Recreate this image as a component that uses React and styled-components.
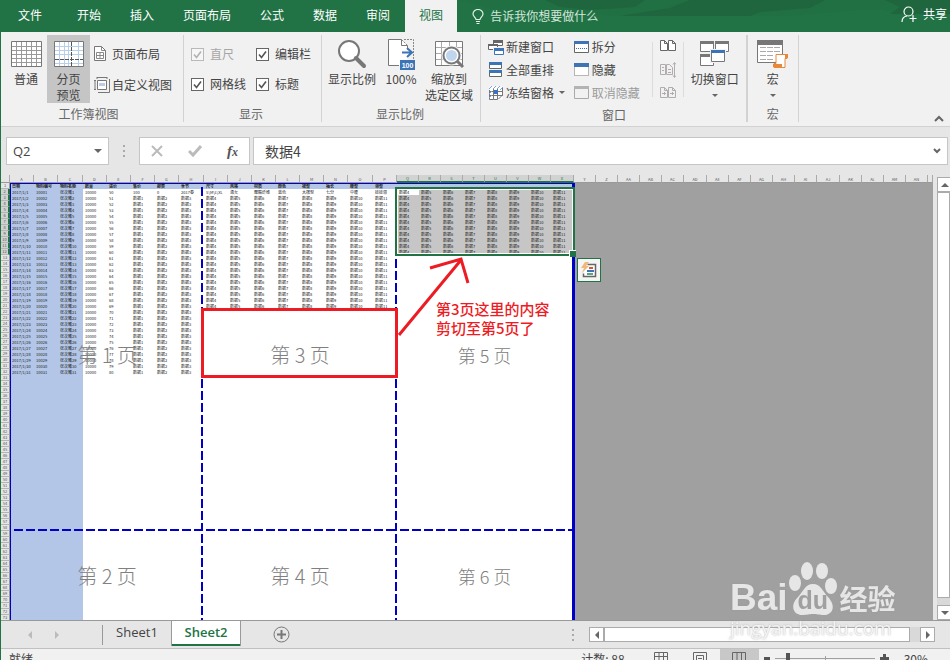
import React from "react";
import styled, { createGlobalStyle } from "styled-components";

const green = "#217346";
const blue = "#0000c8";
const red = "#ed1c24";
const ui = `"Noto Sans CJK SC", sans-serif`;
const latin = `"Open Sans", "Noto Sans CJK SC", sans-serif`;

const GlobalStyle = createGlobalStyle`
  * { box-sizing: border-box; }
  body { margin: 0; font: 12px/16px ${ui}; color: #444; background: #e6e6e6; }
  button, input { font: inherit; color: inherit; }
  button { border: 0; padding: 0; background: none; white-space: nowrap; }
  svg { display: block; flex: none; }
`;

const Window = styled.div`
  display: flex;
  flex-direction: column;
  height: 100vh;
  overflow: hidden;
  border-left: 1px solid ${green};
`;

/* ---------- title tabs ---------- */
const TopBar = styled.header`
  position: relative;
  display: flex;
  flex: none;
  height: 32px;
  background: ${green};
  color: #fff;
`;
const Texture = styled.svg`
  position: absolute;
  right: 0;
  top: 0;
`;
const Tabs = styled.nav`
  display: flex;
  gap: 1px;
`;
const Tab = styled.button`
  padding: 0 14px 2px;
  color: ${(p) => (p.$active ? green : "#fff")};
  background: ${(p) => (p.$active ? "#f1f1f1" : "transparent")};
  &:first-child { padding: 0 20px 2px 17px; }
`;
const TellMe = styled.button`
  position: relative;
  display: flex;
  align-items: center;
  gap: 6px;
  margin-left: 15px;
  color: #d3e5da;
`;
const Share = styled.button`
  position: relative;
  display: flex;
  align-items: center;
  gap: 6px;
  margin: 0 3px 4px auto;
  color: #fff;
`;

/* ---------- ribbon ---------- */
const Ribbon = styled.section`
  display: flex;
  flex: none;
  height: 95px;
  padding: 3px 0 4px;
  background: #f1f1f1;
  border-bottom: 1px solid #d2d2d2;
`;
const Group = styled.div`
  display: flex;
  flex-direction: column;
  padding: 0 ${(p) => p.$right || 0}px 0 ${(p) => p.$left || 0}px;
  border-right: ${(p) => p.$line || 1}px solid #d2d2d2;
`;
const GroupBody = styled.div`
  display: flex;
  height: 69px;
`;
const GroupLabel = styled.div`
  margin-top: 3px;
  text-align: center;
  color: #666;
`;
const BigButton = styled.button`
  display: flex;
  flex-direction: column;
  align-items: center;
  justify-content: flex-start;
  width: ${(p) => p.$w}px;
  padding-top: 3px;
  background: ${(p) => (p.$active ? "#c5c5c5" : "transparent")};
`;
const IconBox = styled.span`
  display: flex;
  flex: none;
  align-items: center;
  justify-content: center;
  height: 32px;
`;
const CaretBox = styled.span`
  padding-top: 7px;
`;
const Lines = styled.span`
  margin-top: 1px;
`;
const Stack = styled.div`
  display: flex;
  flex-direction: column;
  justify-content: center;
  margin-left: ${(p) => p.$left || 0}px;
`;
const SmallButton = styled.button`
  display: flex;
  align-items: center;
  gap: ${(p) => p.$gap || 2}px;
  height: ${(p) => p.$h || 23}px;
  opacity: ${(p) => (p.disabled ? 0.5 : 1)};
  color: #444;
`;
const Check = styled.label`
  display: flex;
  align-items: center;
  gap: 6px;
  height: 30px;
  color: ${(p) => (p.$off ? "#a6a6a6" : "#444")};
`;
const CheckInput = styled.input`
  appearance: none;
  width: 13px;
  height: 13px;
  margin: 0;
  border: 1px solid #666;
  background: #fff url("data:image/svg+xml,%3Csvg xmlns='http://www.w3.org/2000/svg' width='11' height='11'%3E%3Cpath d='M2 5.5l2.5 3L9 2.5' fill='none' stroke='%23555' stroke-width='1.6'/%3E%3C/svg%3E") no-repeat;
  &:disabled { opacity: 0.4; }
`;
const SideBySide = styled.div`
  display: flex;
  flex-direction: column;
  justify-content: space-between;
  height: 55px;
  margin: 7px 6px 0 12px;
  padding: 0 7px;
  border: solid #dcdcdc;
  border-width: 0 1px;
`;
const Collapse = styled.button`
  align-self: flex-end;
  margin: 0 6px 0 auto;
`;

/* ---------- formula bar ---------- */
const FormulaBar = styled.section`
  display: flex;
  flex: none;
  align-items: center;
  height: 48px;
  padding: 0 2px 0 5px;
  background: #e6e6e6;
`;
const Field = styled.div`
  display: flex;
  align-items: center;
  height: 28px;
  border: 1px solid #c6c6c6;
  background: #fff;
  width: ${(p) => (p.$w ? p.$w + "px" : "auto")};
  flex: ${(p) => (p.$w ? "none" : 1)};
  padding: 0 6px;
`;
const FieldInput = styled.input`
  flex: 1;
  min-width: 0;
  border: 0;
  outline: 0;
  padding: 0 0 0 ${(p) => p.$left || 0}px;
  background: none;
  font: ${(p) => p.$size}px/20px ${(p) => (p.$latin ? latin : ui)};
`;
const FxBox = styled(Field)`
  justify-content: space-between;
  margin: 0 3px 0 13px;
  padding: 0 11px;
`;
const FxLabel = styled.button`
  font: italic 700 15px/18px "Liberation Serif", serif;
  color: #555;
  & small { font-size: 12px; }
`;
const NameGap = styled.span`
  margin-left: 14px;
`;

/* ---------- sheet ---------- */
const SheetRow = styled.main`
  display: flex;
  flex: 1;
  min-height: 0;
  background: #e6e6e6;
`;
const GridArea = styled.div`
  position: relative;
  flex: 1;
  min-width: 0;
  overflow: hidden;
  background: #a0a0a0;
`;
const Grid = styled.table`
  width: 100%;
  table-layout: fixed;
  border-collapse: separate;
  border-spacing: 0;
  font: 4px/6px ${ui};
  color: #222;
`;
const Col = styled.col`
  width: ${(p) => p.$w}px;
`;
const ColHead = styled.th`
  height: 8px;
  padding: 0;
  font-weight: 400;
  line-height: 6px;
  color: ${(p) => (p.$on ? green : "#555")};
  background: ${(p) => (p.$on ? "#d2d2d2" : "#e6e6e6")};
  border-right: 1px solid #aaa;
  border-bottom: ${(p) => (p.$on ? "2px solid " + green : "1px solid #999")};
`;
const RowHead = styled.th`
  height: 6px;
  padding: 0;
  font-weight: 400;
  line-height: 5px;
  overflow: hidden;
  color: #555;
  background: ${(p) => (p.$on ? "#d2d2d2" : "#e6e6e6")};
  border-bottom: 1px solid #b5b5b5;
  border-right: ${(p) => (p.$on ? "2px solid " + green : "1px solid #999")};
`;
const tones = { key: "#b4c6e7", plain: "#fff", picked: "#c6c6c6" };
const Cell = styled.td`
  height: 6px;
  padding: 0 0 0 2px;
  overflow: hidden;
  white-space: nowrap;
  font-weight: ${(p) => (p.$bold ? 700 : 400)};
  background: ${(p) => tones[p.$tone]};
`;

/* ---------- overlays above the cells ---------- */
const Pages = styled.div`
  position: absolute;
  left: 9px;
  top: 8px;
  display: grid;
  grid-template-columns: 192px 194px 175px;
  grid-template-rows: 347px 96px;
  border-top: 1px solid ${blue};
  border-left: 1px solid ${blue};
  border-right: 3px solid ${blue};
`;
const dash = (dir) =>
  `repeating-linear-gradient(${dir}, transparent 0 3px, ${blue} 3px 12px)`;
const Page = styled.div`
  display: flex;
  align-items: center;
  justify-content: center;
  padding-bottom: 6px;
  font: 300 ${(p) => (p.$small ? 18 : 20)}px/24px ${ui};
  color: #808080;
  white-space: pre;
  background:
    ${(p) => (p.$right ? dash("180deg") : "none")} right top / 2px 100% no-repeat,
    ${(p) => (p.$bottom ? dash("90deg") : "none")} left bottom / 100% 2px no-repeat;
`;
const Selection = styled.div`
  position: absolute;
  left: 394px;
  top: 12px;
  width: 180px;
  height: 69px;
  border: 2px solid ${green};
  outline: 1px solid #fff;
  outline-offset: -3px;
  &::after {
    content: "";
    position: absolute;
    right: -3px;
    bottom: -3px;
    width: 6px;
    height: 6px;
    background: ${green};
    border: solid #fff;
    border-width: 1px 0 0 1px;
  }
`;
const RedBox = styled.div`
  position: absolute;
  left: 200px;
  top: 133px;
  width: 197px;
  height: 70px;
  border: 3px solid ${red};
`;
const Arrow = styled.svg`
  position: absolute;
  left: 394px;
  top: 80px;
`;
const Note = styled.p`
  position: absolute;
  left: 435px;
  top: 124px;
  margin: 0;
  font: 500 15px/19px ${ui};
  color: ${red};
`;
const PasteOptions = styled.button`
  position: absolute;
  left: 576px;
  top: 83px;
  display: flex;
  align-items: center;
  justify-content: center;
  width: 24px;
  height: 24px;
  border: 1px solid ${green};
  background: #f5f5f5;
`;
const Watermark = styled.div`
  position: fixed;
  right: 50px;
  bottom: 21px;
  display: flex;
  flex-direction: column;
  width: 170px;
  color: #e6e6e6;
  text-shadow: 0 0 2px #999;
  pointer-events: none;
`;
const Brand = styled.div`
  display: flex;
  align-items: flex-end;
  height: 56px;
  font: 700 37px/38px "Liberation Sans", sans-serif;
`;
const Paw = styled.span`
  position: relative;
  width: 50px;
  height: 56px;
`;
const Du = styled.span`
  position: absolute;
  left: 10px;
  bottom: 5px;
  font: 700 25px/24px "Liberation Sans", sans-serif;
  color: #a0a0a0;
  text-shadow: none;
`;
const BrandCn = styled.span`
  padding: 0 0 4px 2px;
  font: 700 28px/30px ${ui};
`;
const Site = styled.span`
  font: 400 19px/22px ${latin};
  color: #f4f4f4;
  text-shadow: 0 0 2px #aaa;
`;

/* ---------- scroll bars ---------- */
const VScroll = styled.div`
  display: flex;
  flex-direction: column;
  flex: none;
  width: 13px;
  margin: 2px 0 0 4px;
  background: #d9d9d9;
`;
const ScrollButton = styled.button`
  display: flex;
  align-items: center;
  justify-content: center;
  flex: none;
  width: 15px;
  height: 15px;
  border: 1px solid #ababab;
  background: #fff;
`;
const Thumb = styled.div`
  flex: 1;
  border: 1px solid #ababab;
  background: #fff;
  margin: ${(p) => (p.$v ? "0 0 7px" : "0 10px 0 0")};
`;
const HScroll = styled.div`
  display: flex;
  width: 346px;
  height: 15px;
  background: #d9d9d9;
`;

/* ---------- sheet tabs and status ---------- */
const SheetBar = styled.nav`
  display: flex;
  flex: none;
  align-items: center;
  height: 28px;
  padding-right: 15px;
  border-top: 1px solid #999;
  background: #e6e6e6;
`;
const NavArrows = styled.div`
  display: flex;
  align-items: center;
  gap: 23px;
  width: 102px;
  height: 20px;
  padding-left: 27px;
  border-right: 1px solid #999;
`;
const SheetTab = styled.button`
  align-self: flex-start;
  height: 25px;
  width: ${(p) => (p.$active ? 70 : 68)}px;
  padding-bottom: 3px;
  font: ${(p) => (p.$active ? 600 : 400)} 13px/20px ${latin};
  color: ${(p) => (p.$active ? green : "#444")};
  background: ${(p) => (p.$active ? "#fff" : "transparent")};
  border: solid #999;
  border-width: ${(p) => (p.$active ? "0 1px" : "0")};
  box-shadow: ${(p) => (p.$active ? "inset 0 -2px " + green : "none")};
`;
const AddSheet = styled.button`
  margin-left: 32px;
`;
const Grip = styled.span`
  display: flex;
  margin: 0 14px 0 auto;
`;
const StatusBar = styled.footer`
  display: flex;
  flex: none;
  height: 12px;
  overflow: hidden;
  padding: 0 22px 0 8px;
  line-height: 20px;
  background: #f1f1f1;
  border-top: 1px solid #c0c0c0;
`;
const Count = styled.span`
  margin: 0 17px 0 auto;
`;
const ViewButton = styled.button`
  display: flex;
  justify-content: center;
  width: 39px;
  height: 20px;
  padding-top: 3px;
  background: ${(p) => (p.$active ? "#c8c8c8" : "transparent")};
`;
const ZoomButton = styled.button`
  display: flex;
  align-items: flex-start;
  height: 20px;
  padding: 5px ${(p) => p.$r || 5}px 0 5px;
`;
const ZoomSlider = styled.input`
  appearance: none;
  width: 100px;
  height: 20px;
  margin: -1px 0 0;
  background:
    linear-gradient(#a0a0a0, #a0a0a0) 50px 8px / 1px 5px no-repeat,
    linear-gradient(#a0a0a0, #a0a0a0) 0 10px / 100% 1px no-repeat;
  &::-webkit-slider-thumb {
    appearance: none;
    width: 4px;
    height: 11px;
    background: #555;
  }
`;

/* ---------- icons ---------- */
const Svg = ({ w, h, children }) => (
  <svg width={w} height={h} viewBox={`0 0 ${w} ${h}`} fill="none" aria-hidden="true">
    {children}
  </svg>
);
const Caret = ({ dir = "down", size = 4, color = "#666" }) => {
  const s = size;
  const shapes = {
    down: [2 * s, s, `M0 0H${2 * s}L${s} ${s}Z`],
    up: [2 * s, s, `M0 ${s}H${2 * s}L${s} 0Z`],
    left: [s, 2 * s, `M${s} 0V${2 * s}L0 ${s}Z`],
    right: [s, 2 * s, `M0 0V${2 * s}L${s} ${s}Z`],
  };
  const [w, h, d] = shapes[dir];
  return <Svg w={w} h={h}><path d={d} fill={color} /></Svg>;
};
const GridIcon = () => (
  <Svg w={31} h={26}>
    <path d="M.5.5h30v25h-30z" fill="#fff" stroke="#777" />
    <path d="M1 5.5h29M1 9.5h29M1 13.5h29M1 17.5h29M1 21.5h29M5.5 1v24M10.5 1v24M15.5 1v24M20.5 1v24M25.5 1v24" stroke="#999" />
  </Svg>
);
const BreakIcon = () => (
  <Svg w={30} h={26}>
    <path d="M.5.5h29v25h-29z" fill="#fff" stroke="#777" />
    <path d="M1 5.5h28M1 9.5h28M1 13.5h28M1 22.5h28M5.5 1v24M10.5 1v24M14.5 1v24M24.5 1v24" stroke="#b8cfec" />
    <path d="M17.5 1v24M1 18.5h28" stroke="#555" strokeDasharray="4 1" />
  </Svg>
);
const LayoutIcon = () => (
  <Svg w={12} h={15}>
    <path d="M.5.5h7l4 4v10H.5z" fill="#fff" stroke="#777" />
    <path d="M7.5.5v4h4M2.5 6.5h7v6h-7zM6 6.5v6M2.5 9.5h7" stroke="#888" />
  </Svg>
);
const CustomViewIcon = () => (
  <Svg w={16} h={16}>
    <path d="M3.5 3.5h9v9h-9z" fill="#fff" stroke="#777" />
    <path d="M5 6h6v3H5z" fill="#b8cfec" />
    <path d="M3 .5h10M3 0v2M13 0v2M0 3.5h2M1 3.5v9M0 12.5h2M15.5 2v13.5H4" stroke="#777" />
  </Svg>
);
const ZoomIcon = () => (
  <Svg w={30} h={29}>
    <circle cx="12" cy="11" r="10" fill="#fff" stroke="#777" strokeWidth="2" />
    <path d="M19 18l8 8" stroke="#777" strokeWidth="4" strokeLinecap="round" />
  </Svg>
);
const HundredIcon = () => (
  <Svg w={28} h={32}>
    <path d="M1.5 1.5h13l6 6v20h-19z" fill="#fff" />
    <path d="M12 27.5H1.5v-26h13v6h6v4" stroke="#777" />
    <path d="M14.5 1.5l6 6M17 1.5h9.500V22" stroke="#888" strokeDasharray="2 1" />
    <path d="M15 14.500h9M20 10l5 4.500-5 4.500" stroke="#3d74b5" strokeWidth="2" />
    <path d="M13 22h15v10H13z" fill="#3d74b5" />
    <text x="20.500" y="30" textAnchor="middle" fill="#fff" fontSize="7" fontWeight="700" fontFamily="Liberation Sans">100</text>
  </Svg>
);
const ZoomSelIcon = () => (
  <Svg w={31} h={30}>
    <path d="M1.5 2.500h27v24h-27z" fill="#fff" stroke="#777" />
    <path d="M2 8.500h26M2 14.500h26M2 20.500h26M7.500 3v23M15.500 3v5M22.500 3v6" stroke="#aaa" />
    <circle cx="17.500" cy="16.500" r="10" fill="#f1f1f1" />
    <circle cx="17.500" cy="16.500" r="8" fill="#fff" stroke="#777" strokeWidth="2" />
    <circle cx="17.500" cy="16.500" r="5.500" fill="#c0d5ee" />
    <path d="M23 22l6 6" stroke="#777" strokeWidth="3" />
  </Svg>
);
const NewWinIcon = () => (
  <Svg w={16} h={16}>
    <path d="M5.500 1.500h9v5h-9z" fill="#fff" stroke="#666" /><path d="M5 1h10v3H5z" fill="#666" />
    <path d="M.5 5.500h9v5h-9z" fill="#fff" stroke="#666" /><path d="M0 5h10v2H0z" fill="#666" />
    <path d="M5 8h11v8H5z" fill="#f1f1f1" />
    <path d="M6.500 9.500h9v6h-9z" fill="#fff" stroke="#3d74b5" /><path d="M6 9h10v3H6z" fill="#3d74b5" />
  </Svg>
);
const ArrangeIcon = () => (
  <Svg w={16} h={16}>
    <path d="M1.500.500h12v6h-12zM1.500 8.500h12v6h-12z" fill="#fff" stroke="#666" />
    <path d="M1 0h13v3H1zM1 8h13v3H1z" fill="#3d74b5" />
  </Svg>
);
const FreezeIcon = () => (
  <Svg w={16} h={16}>
    <path d="M1.500 1.500h13v13h-13z" fill="#fff" />
    <path d="M1.500 5v9.500h4M5.500 3v11.500h4V3.500M1 6.500h14M1 10.500h14M14.500 2v8l-4 4" stroke="#777" />
    <path d="M6 5h4v4H6z" fill="#3d74b5" />
    <path d="M1 4l3-3M5 4l3-3M9 4l3-3M12 5l3-3M1 9l3-3M1 13l3-3" stroke="#7fa5d4" />
  </Svg>
);
const SplitIcon = () => (
  <Svg w={16} h={14}>
    <path d="M.5 1.500h14v11H.5z" fill="#fff" stroke="#666" />
    <path d="M0 1h15v3H0z" fill="#3d74b5" />
    <path d="M2 8.500h11" stroke="#3d74b5" strokeDasharray="1 1" />
  </Svg>
);
const HideIcon = () => (
  <Svg w={16} h={14}>
    <path d="M.5 1.500h14v11H.5z" fill="#fff" stroke="#777" strokeDasharray="1 1" />
    <path d="M0 0h15v4H0z" fill="#3d74b5" />
  </Svg>
);
const UnhideIcon = () => (
  <Svg w={16} h={14}>
    <path d="M.5.500h14v12H.5z" fill="#f1f1f1" stroke="#666" />
    <path d="M0 0h15v3H0z" fill="#777" />
  </Svg>
);
const pagesPath = "M.5.500h4l3 3v7h-7zM4.500.500v3h3M8.500 10.500v-10h4l3 3v7zM12.500.500v3h3";
const PagesIcon = () => (
  <Svg w={16} h={12}><path d={pagesPath} fill="#fff" stroke="#666" /></Svg>
);
const SyncIcon = () => (
  <Svg w={16} h={16}>
    <path d="M.5 2.500h5v10h-5zM6.500 2.500h3l3 3v7h-6zM2 5.500h2M2 8.500h2M8 7.500h3M8 10.500h3M14.500 1v14M13 2.500l1.500-2 1.500 2M13 13.500l1.500 2 1.500-2" stroke="#b0acb0" />
  </Svg>
);
const ResetIcon = () => (
  <Svg w={16} h={12}>
    <path d={pagesPath} stroke="#b0acb0" />
    <path d="M2 6.500h4M4.500 5v3M10 6.500h4M12.500 5v3" stroke="#b0acb0" />
  </Svg>
);
const SwitchIcon = () => (
  <Svg w={30} h={26}>
    <path d="M.5.500h13v10H.5zM15.500.500h13v10h-13zM.5 13.500h13v11H.5z" fill="#fff" stroke="#777" />
    <path d="M0 0h14v3H0zM15 0h14v3H15zM0 13h14v3H0z" fill="#777" />
    <path d="M10 8h16v14H10z" fill="#f1f1f1" />
    <path d="M11.500 9.500h13v11h-13z" fill="#fff" stroke="#777" />
    <path d="M11 9h14v3H11z" fill="#3d74b5" />
  </Svg>
);
const MacroIcon = () => (
  <Svg w={31} h={28}>
    <path d="M.5.500h25v22H.5z" fill="#fff" stroke="#777" />
    <path d="M0 0h26v5H0z" fill="#777" />
    <path d="M3 7.500h20M3 11.500h20M3 15.500h14M3 19.500h13" stroke="#aaa" strokeDasharray="6 1" />
    <path d="M19 14.500h11v4h-2v9H17v-4h2z" fill="#fff" stroke="#e8883a" />
    <path d="M28 14h3v4h-3zM16 24h9v3h-9z" fill="#e8883a" />
  </Svg>
);
const Bulb = () => (
  <Svg w={12} h={15}>
    <path d="M4 10.500C3.500 8 1 7.500 1 5a5 4.500 0 0 1 10 0c0 2.500-2.500 3-3 5.500zM4 12.500h4M4.500 14.500h3" stroke="#e4efe8" strokeWidth="1.200" />
  </Svg>
);
const Person = () => (
  <Svg w={16} h={17}>
    <circle cx="7.500" cy="5.500" r="4.500" stroke="#fff" strokeWidth="1.200" />
    <path d="M1 16c0-4 2-5.500 5-6M8.500 12.500h7M12 9v7" stroke="#fff" strokeWidth="1.200" />
  </Svg>
);
const Dots = () => (
  <Svg w={3} h={12}><path d="M0 0h2v2H0zM0 5h2v2H0zM0 10h2v2H0z" fill="#aaa" /></Svg>
);

/* ---------- data ---------- */
const letter = (i) => (i < 26 ? "" : "A") + String.fromCharCode(65 + (i % 26));
const colWidths = [
  24, 24, 25, 24, 24, 24, 24, 25, 24, 24, 24, 24, 24, 24, 25, 24,
  22, 22, 22, 22, 22, 22, 22, 23,
  22, 22, 22, 22, 22, 23, 22, 22, 22, 22, 22, 23, 22, 22, 22, 22,
];
const titles = ["日期", "物料编号", "物料名称", "数量", "进价", "售价", "邮费", "季节", "尺寸", "风格", "材质", "颜色", "裙型", "袖长", "腰型", "领型"];
const firstRow = ["2017/1/1", "10001", "张次曦1", "10000", "50", "100", "0", "2017春", "S\\M\\L\\XL", "淑女", "聚酯纤维", "蓝色", "大摆型", "七分", "中腰", "娃娃领"];

function cellText(row, col) {
  if (row === 1) return titles[col] || "";
  if (row > 32) return "";
  const n = row - 1;
  if (col >= 16) return row <= 12 ? `数据${col - 12}` : "";
  if (row === 2) return firstRow[col];
  if (col === 0) return `2017/1/${n}`;
  if (col === 1) return `${10000 + n}`;
  if (col === 2) return `张次曦${n}`;
  if (col === 3) return "10000";
  if (col === 4) return `${49 + n}`;
  if (col >= 8 && row > 21) return "";
  return `数据${col - 4}`;
}
function cellTone(row, col) {
  if (row === 1 || col < 3) return "key";
  if (col >= 16 && row <= 12 && !(row === 2 && col === 16)) return "picked";
  return "plain";
}
const rows = Array.from({ length: 74 }, (_, i) => i + 1);
const dataCols = Array.from({ length: 24 }, (_, i) => i);

const Sheet = () => (
  <Grid>
    <colgroup>
      <Col $w={9} />
      {colWidths.map((w, i) => <Col key={i} $w={w} />)}
      <col />
    </colgroup>
    <thead>
      <tr>
        <ColHead />
        {colWidths.map((_, i) => (
          <ColHead key={i} $on={i >= 16 && i < 24}>{letter(i)}</ColHead>
        ))}
        <ColHead />
      </tr>
    </thead>
    <tbody>
      {rows.map((r) => (
        <tr key={r}>
          <RowHead $on={r > 1 && r < 13}>{r}</RowHead>
          {dataCols.map((c) => (
            <Cell key={c} $tone={cellTone(r, c)} $bold={r === 1}>{cellText(r, c)}</Cell>
          ))}
        </tr>
      ))}
    </tbody>
  </Grid>
);

export default function App() {
  return (
    <Window>
      <GlobalStyle />
      <TopBar>
        <Texture width="490" height="17" viewBox="0 0 490 17" aria-hidden="true">
          <path d="M0 0H490V15H440L424 10H400L330 16H150L120 13L70 15L30 9Z" fill="#217044" />
          <path d="M85 0H185L175 7L130 10L100 7ZM230 0H365L350 8L300 12L290 16H160L210 8ZM425 0H490V14H430L440 7Z" fill="#1f663e" />
        </Texture>
        <Tabs>
          {["文件", "开始", "插入", "页面布局", "公式", "数据", "审阅", "视图"].map((t) => (
            <Tab key={t} $active={t === "视图"}>{t}</Tab>
          ))}
        </Tabs>
        <TellMe><Bulb />告诉我你想要做什么</TellMe>
        <Share><Person />共享</Share>
      </TopBar>

      <Ribbon>
        <Group $left={4} $right={11}>
          <GroupBody>
            <BigButton $w={42}><IconBox><GridIcon /></IconBox><Lines>普通</Lines></BigButton>
            <BigButton $w={43} $active><IconBox><BreakIcon /></IconBox><Lines>分页<br />预览</Lines></BigButton>
            <Stack $left={4}>
              <SmallButton $h={31} $gap={6}><LayoutIcon />页面布局</SmallButton>
              <SmallButton $h={31}><CustomViewIcon />自定义视图</SmallButton>
            </Stack>
          </GroupBody>
          <GroupLabel>工作簿视图</GroupLabel>
        </Group>
        <Group $left={7} $right={10}>
          <GroupBody>
            <Stack>
              <Check $off><CheckInput type="checkbox" defaultChecked disabled />直尺</Check>
              <Check><CheckInput type="checkbox" defaultChecked />网格线</Check>
            </Stack>
            <Stack $left={10}>
              <Check><CheckInput type="checkbox" defaultChecked />编辑栏</Check>
              <Check><CheckInput type="checkbox" defaultChecked />标题</Check>
            </Stack>
          </GroupBody>
          <GroupLabel>显示</GroupLabel>
        </Group>
        <Group $left={4} $right={6}>
          <GroupBody>
            <BigButton $w={52}><IconBox><ZoomIcon /></IconBox><Lines>显示比例</Lines></BigButton>
            <BigButton $w={46}><IconBox><HundredIcon /></IconBox><Lines>100%</Lines></BigButton>
            <BigButton $w={50}><IconBox><ZoomSelIcon /></IconBox><Lines>缩放到<br />选定区域</Lines></BigButton>
          </GroupBody>
          <GroupLabel>显示比例</GroupLabel>
        </Group>
        <Group $left={7} $right={6} $line={2}>
          <GroupBody>
            <Stack>
              <SmallButton><NewWinIcon />新建窗口</SmallButton>
              <SmallButton><ArrangeIcon />全部重排</SmallButton>
              <SmallButton><FreezeIcon />冻结窗格&nbsp;<Caret size={3} /></SmallButton>
            </Stack>
            <Stack $left={9}>
              <SmallButton><SplitIcon />拆分</SmallButton>
              <SmallButton><HideIcon />隐藏</SmallButton>
              <SmallButton disabled><UnhideIcon />取消隐藏</SmallButton>
            </Stack>
            <SideBySide>
              <SmallButton $h={8} aria-label="并排查看"><PagesIcon /></SmallButton>
              <SmallButton $h={16} aria-label="同步滚动"><SyncIcon /></SmallButton>
              <SmallButton $h={8} aria-label="重设窗口位置"><ResetIcon /></SmallButton>
            </SideBySide>
            <BigButton $w={50}>
              <IconBox><SwitchIcon /></IconBox><Lines>切换窗口</Lines>
              <CaretBox><Caret size={3} /></CaretBox>
            </BigButton>
          </GroupBody>
          <GroupLabel>窗口</GroupLabel>
        </Group>
        <Group $left={4} $right={4}>
          <GroupBody>
            <BigButton $w={42}>
              <IconBox><MacroIcon /></IconBox><Lines>宏</Lines>
              <CaretBox><Caret size={3} /></CaretBox>
            </BigButton>
          </GroupBody>
          <GroupLabel>宏</GroupLabel>
        </Group>
        <Collapse aria-label="折叠功能区">
          <Svg w={10} h={7}><path d="M1 6l4-4 4 4" stroke="#666" strokeWidth="2" /></Svg>
        </Collapse>
      </Ribbon>

      <FormulaBar>
        <Field $w={103}>
          <FieldInput aria-label="名称框" defaultValue="Q2" $size={13} $latin />
          <button aria-label="选择名称"><Caret /></button>
        </Field>
        <NameGap><Dots /></NameGap>
        <FxBox $w={111}>
          <button aria-label="取消"><Svg w={12} h={12}><path d="M1 1l10 10M11 1L1 11" stroke="#bbb" strokeWidth="2" /></Svg></button>
          <button aria-label="输入"><Svg w={14} h={12}><path d="M1 6l4 4 8-9" stroke="#bbb" strokeWidth="3" /></Svg></button>
          <FxLabel aria-label="插入函数">f<small>x</small></FxLabel>
        </FxBox>
        <Field>
          <FieldInput aria-label="编辑栏" defaultValue="数据4" $size={14} $left={5} />
          <button aria-label="展开编辑栏">
            <Svg w={8} h={6}><path d="M1 1l3 3 3-3" stroke="#666" strokeWidth="2" /></Svg>
          </button>
        </Field>
      </FormulaBar>

      <SheetRow>
        <GridArea>
          <Sheet />
          <Pages>
            <Page $right $bottom>第 1 页</Page>
            <Page $right $bottom>第 3 页</Page>
            <Page $bottom $small>第 5 页</Page>
            <Page $right>第 2 页</Page>
            <Page $right>第 4 页</Page>
            <Page $small>第 6 页</Page>
          </Pages>
          <Selection />
          <RedBox />
          <Arrow width="90" height="84" viewBox="0 0 90 84" fill="none" stroke={red} strokeWidth="3">
            <path d="M4 80L66 5M35 13L66 4L73 28" />
          </Arrow>
          <Note>第3页这里的内容<br />剪切至第5页了</Note>
          <PasteOptions aria-label="粘贴选项">
            <Svg w={17} h={17}>
              <path d="M6.500 2.500h8v12h-12v-3" fill="#fff" stroke="#666" strokeWidth="1.500" />
              <path d="M8 6h4" stroke="#d8553a" strokeWidth="2" />
              <path d="M6 9h7" stroke="#3d74b5" strokeWidth="2" />
              <path d="M6 12h6" stroke="#5aa58a" strokeWidth="2" />
              <path d="M4 0h4L5 4h3L1 11l2-5H0z" fill="#eebb77" />
            </Svg>
          </PasteOptions>
        </GridArea>
        <VScroll>
          <ScrollButton aria-label="向上"><Caret dir="up" /></ScrollButton>
          <Thumb $v />
          <ScrollButton aria-label="向下"><Caret /></ScrollButton>
        </VScroll>
      </SheetRow>

      <SheetBar>
        <NavArrows>
          <button aria-label="上一个"><Caret dir="left" color="#bbb" /></button>
          <button aria-label="下一个"><Caret dir="right" color="#bbb" /></button>
        </NavArrows>
        <SheetTab>Sheet1</SheetTab>
        <SheetTab $active>Sheet2</SheetTab>
        <AddSheet aria-label="新工作表">
          <Svg w={17} h={17}>
            <circle cx="8.500" cy="8.500" r="7.500" stroke="#777" />
            <path d="M4 8.500h9M8.500 4v9" stroke="#777" strokeWidth="2" />
          </Svg>
        </AddSheet>
        <Grip><Dots /></Grip>
        <HScroll>
          <ScrollButton aria-label="向左"><Caret dir="left" /></ScrollButton>
          <Thumb />
          <ScrollButton aria-label="向右"><Caret dir="right" /></ScrollButton>
        </HScroll>
      </SheetBar>

      <StatusBar>
        <span>就绪</span>
        <Count>计数: 88</Count>
        <ViewButton aria-label="普通"><Svg w={14} h={14}><path d="M.5.500h13v13H.5zM.5 4.500h13M.5 8.500h13M5 .5v13M9.500.500v13" stroke="#666" /></Svg></ViewButton>
        <ViewButton aria-label="页面布局"><Svg w={14} h={14}><path d="M.5.500h13v13H.5zM3.500 3.500h7v10h-7zM5 6.500h4M5 8.500h4" stroke="#666" /></Svg></ViewButton>
        <ViewButton $active aria-label="分页预览"><Svg w={14} h={14}><path d="M.5.500h13v13H.5zM5 .5v8M9.500.500v8M.5 8.500h9" stroke="#666" /></Svg></ViewButton>
        <ZoomButton aria-label="缩小"><Svg w={6} h={9}><path d="M0 4.500h6" stroke="#555" strokeWidth="3" /></Svg></ZoomButton>
        <ZoomSlider type="range" aria-label="显示比例" min="0" max="100" defaultValue="12" />
        <ZoomButton aria-label="放大" $r={15}><Svg w={9} h={9}><path d="M0 4.500h9M4.500 0v9" stroke="#555" strokeWidth="3" /></Svg></ZoomButton>
        <span>30%</span>
      </StatusBar>

      <Watermark>
        <Brand>
          Bai
          <Paw>
            <Svg w={50} h={56}>
              <g fill="#e6e6e6">
                <ellipse cx="7" cy="22" rx="6" ry="8" />
                <ellipse cx="19" cy="10" rx="6" ry="9" />
                <ellipse cx="34" cy="10" rx="6" ry="8" />
                <ellipse cx="43" cy="25" rx="6" ry="8" />
                <path d="M25 23c8 0 10 8 15 13 9 10 4 18-4 18-5 0-7-1-11-1s-6 1-11 1c-8 0-13-9-4-18 5-5 7-13 15-13z" />
              </g>
            </Svg>
            <Du>du</Du>
          </Paw>
          <BrandCn>经验</BrandCn>
        </Brand>
        <Site>jingyan.baidu.com</Site>
      </Watermark>
    </Window>
  );
}
